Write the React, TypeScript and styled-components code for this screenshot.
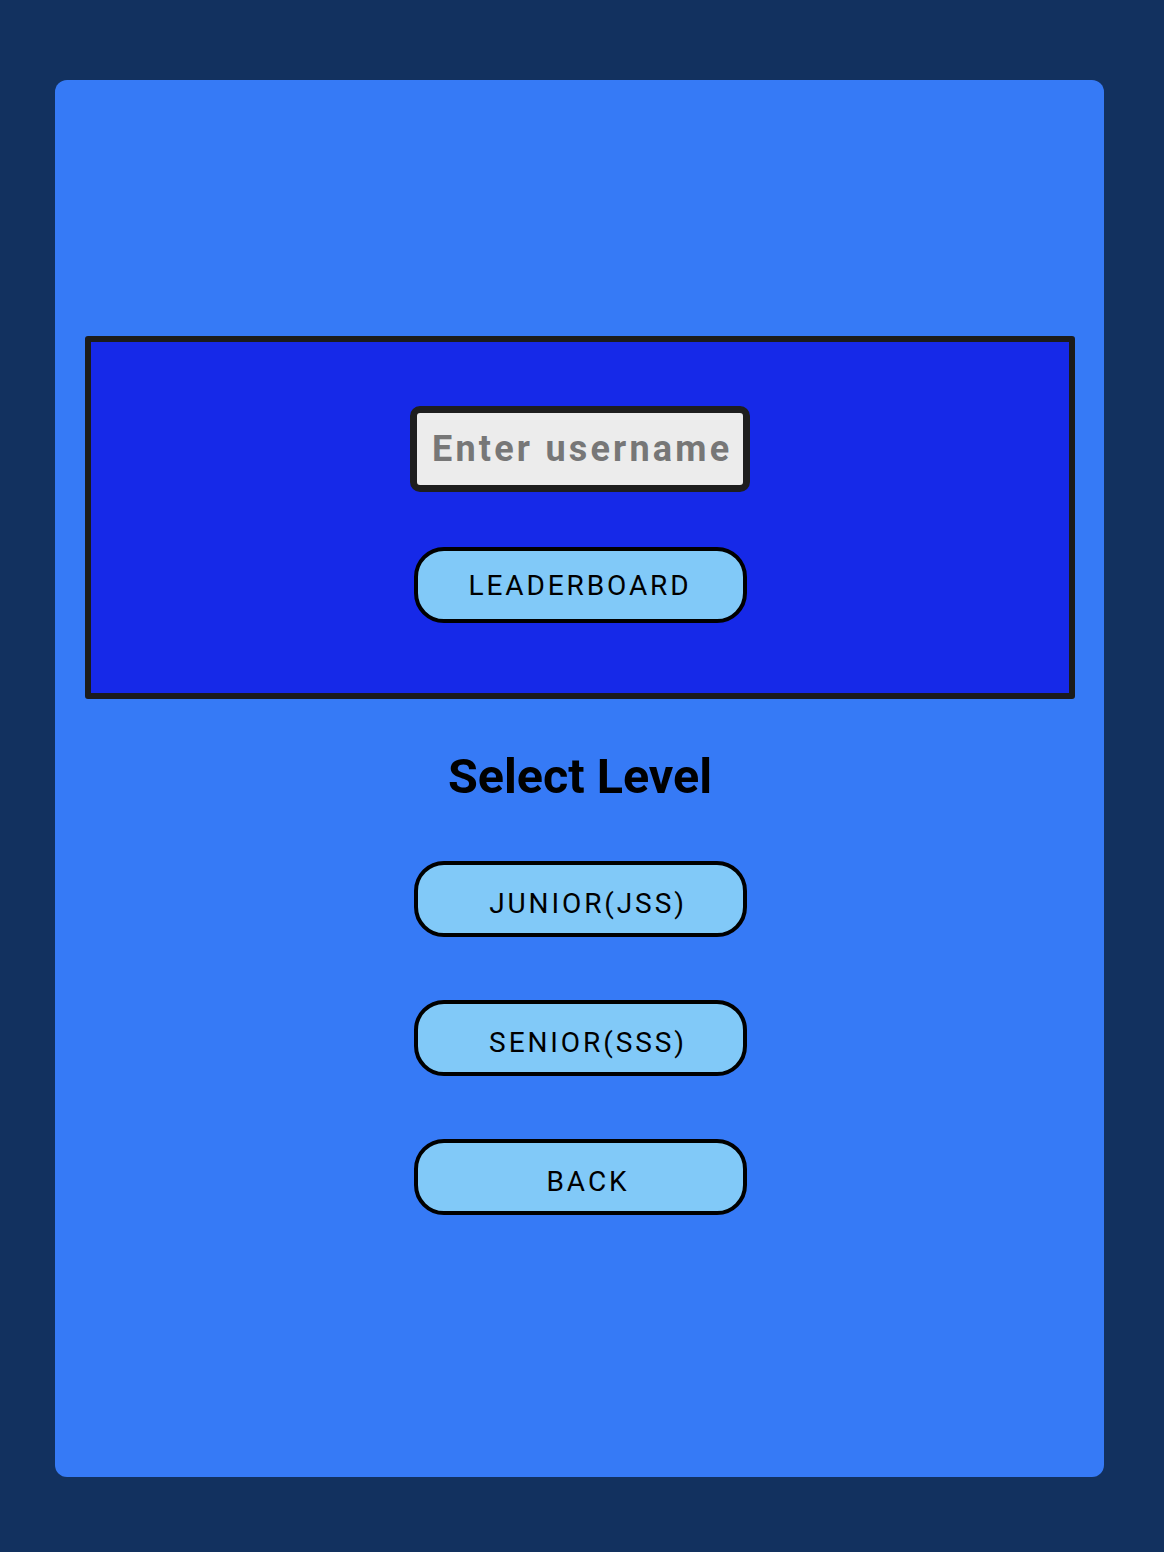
import React from "react";
import styled, { createGlobalStyle } from "styled-components";

const Global = createGlobalStyle`
  html, body { margin: 0; padding: 0; }
  body {
    background: #12315f;
    font-family: Roboto, "Liberation Sans", sans-serif;
  }
  #root { min-height: 1552px; }
`;

const Page = styled.div`
  box-sizing: border-box;
  width: 1164px;
  height: 1552px;
  padding: 80px 60px 75px 55px;
  display: flex;
`;

const Card = styled.main`
  flex: 1;
  background: #367af6;
  border-radius: 12px;
  padding: 256px 29px 0 30px;
  display: flex;
  flex-direction: column;
  align-items: stretch;
`;

const LoginBox = styled.section`
  box-sizing: border-box;
  height: 363px;
  background: #1629e8;
  border: 6px solid #1b1b1b;
  border-radius: 3px;
  display: flex;
  flex-direction: column;
  align-items: center;
  padding-top: 64px;
  gap: 55px;
`;

const Input = styled.input`
  box-sizing: border-box;
  width: 340px;
  height: 86px;
  background: #ececec;
  border: 7px solid #1e1e1e;
  border-radius: 10px;
  padding: 0 0 0 15px;
  font-family: Roboto, "Liberation Sans", sans-serif;
  font-weight: 700;
  font-size: 36px;
  letter-spacing: 3.2px;
  color: #222;
  outline: none;
  &::placeholder { color: #777777; opacity: 1; }
`;

const Pill = styled.button<{ $level?: boolean }>`
  box-sizing: border-box;
  width: 333px;
  height: 76px;
  flex: none;
  background: #81c9f8;
  border: 4px solid #000;
  border-radius: 30px;
  padding: ${(p) => (p.$level ? "8px 0 0 16px" : "0")};
  font-family: Roboto, "Liberation Sans", sans-serif;
  font-weight: 400;
  font-size: 28px;
  letter-spacing: 2.9px;
  color: #000;
  cursor: pointer;
`;

const Levels = styled.div`
  display: flex;
  flex-direction: column;
  align-items: center;
  gap: 63px;
`;

const Title = styled.h2`
  margin: 46px 0 52px;
  font-family: Roboto, "Liberation Sans", sans-serif;
  font-weight: 700;
  font-size: 48.5px;
  line-height: 64px;
  color: #000;
  text-align: center;
`;

export default function App() {
  return (
    <>
      <Global />
      <Page>
        <Card>
          <LoginBox>
            <Input placeholder="Enter username" />
            <Pill>LEADERBOARD</Pill>
          </LoginBox>
          <Title>Select Level</Title>
          <Levels>
            <Pill $level>JUNIOR(JSS)</Pill>
            <Pill $level>SENIOR(SSS)</Pill>
            <Pill $level>BACK</Pill>
          </Levels>
        </Card>
      </Page>
    </>
  );
}
